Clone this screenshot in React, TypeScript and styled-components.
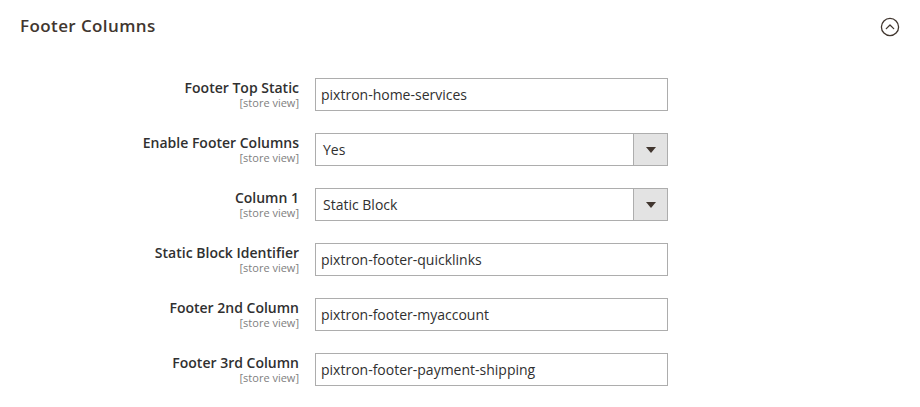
import React from "react";
import styled, { createGlobalStyle } from "styled-components";

const Global = createGlobalStyle`
  html, body { margin: 0; padding: 0; background: #fff; }
  body { font-family: "Open Sans", "Liberation Sans", sans-serif; color: #303030; }
`;

const Page = styled.div`
  width: 920px;
  height: 407px;
  box-sizing: border-box;
  padding: 0 0 0 20px;
  overflow: hidden;
`;

const Header = styled.div`
  display: flex;
  align-items: center;
  justify-content: space-between;
  height: 52px;
  padding-right: 20px;
`;

const Title = styled.h2`
  margin: 0 0 1px 0;
  font-size: 17px;
  font-weight: 600;
  color: #41362f;
  letter-spacing: 0.4px;
`;

const Toggle = styled.span`
  display: flex;
  width: 20px;
  height: 20px;
  margin-top: 2px;
`;

const Fields = styled.div`
  display: flex;
  flex-direction: column;
  gap: 22px;
  padding-top: 26px;
`;

const Row = styled.div`
  display: grid;
  grid-template-columns: 279px 353px;
  column-gap: 16px;
  align-items: start;
`;

const LabelBox = styled.div`
  display: flex;
  flex-direction: column;
  align-items: flex-end;
  text-align: right;
  padding-top: 1px;
`;

const Label = styled.span`
  font-size: 14px;
  font-weight: 600;
  color: #303030;
  line-height: 18px;
`;

const Scope = styled.span`
  font-size: 11px;
  color: #808080;
  line-height: 12px;
`;

const Input = styled.div`
  box-sizing: border-box;
  height: 33px;
  border: 1px solid #adadad;
  background: #fff;
  display: flex;
  align-items: center;
  padding-left: 5px;
  font-size: 14px;
  color: #303030;
`;

const Select = styled.div`
  box-sizing: border-box;
  height: 33px;
  border: 1px solid #adadad;
  background: #fff;
  display: flex;
  align-items: stretch;
  font-size: 14px;
  color: #303030;
`;

const SelectValue = styled.span`
  flex: 1;
  display: flex;
  align-items: center;
  padding-left: 7px;
`;

const SelectButton = styled.span`
  width: 33px;
  border-left: 1px solid #adadad;
  background: #e3e3e3;
  display: flex;
  align-items: center;
  justify-content: center;
  &::after {
    content: "";
    display: block;
    border-left: 5px solid transparent;
    border-right: 5px solid transparent;
    border-top: 6px solid #41362f;
    margin-top: 1px;
  }
`;

type Field = { label: string; value: string; select?: boolean };

const fields: Field[] = [
  { label: "Footer Top Static", value: "pixtron-home-services" },
  { label: "Enable Footer Columns", value: "Yes", select: true },
  { label: "Column 1", value: "Static Block", select: true },
  { label: "Static Block Identifier", value: "pixtron-footer-quicklinks" },
  { label: "Footer 2nd Column", value: "pixtron-footer-myaccount" },
  { label: "Footer 3rd Column", value: "pixtron-footer-payment-shipping" },
];

export default function App() {
  return (
    <>
      <Global />
      <Page>
        <Header>
          <Title>Footer Columns</Title>
          <Toggle>
            <svg width="20" height="20" viewBox="0 0 20 20" fill="none">
              <circle cx="10" cy="10" r="8.6" stroke="#41362f" strokeWidth="1.3" />
              <path d="M6.3 11.6 L10 8 L13.7 11.6" stroke="#41362f" strokeWidth="1.3" strokeLinecap="round" strokeLinejoin="round" />
            </svg>
          </Toggle>
        </Header>
        <Fields>
          {fields.map((f) => (
            <Row key={f.label}>
              <LabelBox>
                <Label>{f.label}</Label>
                <Scope>[store view]</Scope>
              </LabelBox>
              {f.select ? (
                <Select>
                  <SelectValue>{f.value}</SelectValue>
                  <SelectButton />
                </Select>
              ) : (
                <Input>{f.value}</Input>
              )}
            </Row>
          ))}
        </Fields>
      </Page>
    </>
  );
}
